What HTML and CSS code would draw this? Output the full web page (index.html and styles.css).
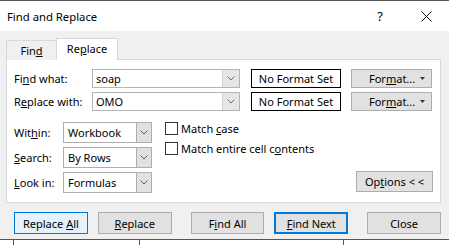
FILE: index.html
```html
<!DOCTYPE html>
<html lang="en">
<head>
    <meta charset="UTF-8">
    <meta name="viewport" content="width=device-width, initial-scale=1.0">
    <title>Find and Replace</title>
    <link rel="stylesheet" href="styles.css">
</head>
<body>
    <div class="window">
        <div class="titlebar">
            <span class="title">Find and Replace</span>
            <span class="cap-btn">?</span>
            <span class="cap-btn">
                <svg width="11" height="11" viewBox="0 0 11 11"><path d="M0.5 0.5 L10.5 10.5 M10.5 0.5 L0.5 10.5" stroke="#111" stroke-width="1" fill="none"/></svg>
            </span>
        </div>
        <div class="content">
            <div class="tabs">
                <div class="tab"><span>Fin<u>d</u></span></div>
                <div class="tab active"><span>Re<u>p</u>lace</span></div>
            </div>
            <div class="panel">
                <div class="find-rows">
                    <div class="row">
                        <span class="lbl lbl-wide">Fi<u>n</u>d what:</span>
                        <div class="combo">
                            <span class="val">soap</span>
                            <span class="drop"><svg width="8" height="5" viewBox="0 0 8 5"><polyline points="0.5,0.5 4,4 7.5,0.5" stroke="#707070" fill="none"/></svg></span>
                        </div>
                        <div class="fmt-box">No Format Set</div>
                        <div class="btn fmt-btn"><span>For<u>m</u>at...</span><svg class="arrow" width="5" height="3" viewBox="0 0 5 3"><polygon points="0,0 5,0 2.5,3" fill="#333"/></svg></div>
                    </div>
                    <div class="row">
                        <span class="lbl lbl-wide">R<u>e</u>place with:</span>
                        <div class="combo">
                            <span class="val">OMO</span>
                            <span class="drop"><svg width="8" height="5" viewBox="0 0 8 5"><polyline points="0.5,0.5 4,4 7.5,0.5" stroke="#707070" fill="none"/></svg></span>
                        </div>
                        <div class="fmt-box">No Format Set</div>
                        <div class="btn fmt-btn"><span>For<u>m</u>at...</span><svg class="arrow" width="5" height="3" viewBox="0 0 5 3"><polygon points="0,0 5,0 2.5,3" fill="#333"/></svg></div>
                    </div>
                </div>
                <div class="options">
                    <div class="selects">
                        <div class="srow">
                            <span class="lbl">Wit<u>h</u>in:</span>
                            <div class="select"><span class="val">Workbook</span><span class="sdrop"><svg width="8" height="5" viewBox="0 0 8 5"><polyline points="0.5,0.5 4,4 7.5,0.5" stroke="#606060" fill="none"/></svg></span></div>
                        </div>
                        <div class="srow">
                            <span class="lbl"><u>S</u>earch:</span>
                            <div class="select"><span class="val">By Rows</span><span class="sdrop"><svg width="8" height="5" viewBox="0 0 8 5"><polyline points="0.5,0.5 4,4 7.5,0.5" stroke="#606060" fill="none"/></svg></span></div>
                        </div>
                        <div class="srow">
                            <span class="lbl"><u>L</u>ook in:</span>
                            <div class="select"><span class="val">Formulas</span><span class="sdrop"><svg width="8" height="5" viewBox="0 0 8 5"><polyline points="0.5,0.5 4,4 7.5,0.5" stroke="#606060" fill="none"/></svg></span></div>
                        </div>
                    </div>
                    <div class="checks">
                        <div class="check"><span class="box"></span><span>Match <u>c</u>ase</span></div>
                        <div class="check"><span class="box"></span><span>Match entire cell c<u>o</u>ntents</span></div>
                        <div class="btn opt-btn"><span>Op<u>t</u>ions &lt; &lt;</span></div>
                    </div>
                </div>
            </div>
            <div class="actions">
                <div class="btn hover"><span>Replace <u>A</u>ll</span></div>
                <div class="btn"><span><u>R</u>eplace</span></div>
                <div class="btn gap-lg"><span>F<u>i</u>nd All</span></div>
                <div class="btn default"><span><u>F</u>ind Next</span></div>
                <div class="btn gap-lg"><span>Close</span></div>
            </div>
        </div>
        <div class="sheet">
            <div class="cell c1"></div>
            <div class="cell c2"></div>
            <div class="cell c3"></div>
        </div>
    </div>
</body>
</html>
```

FILE: styles.css
```css
* {
    box-sizing: border-box;
}
body {
    margin: 0;
    width: 449px;
    height: 245px;
    overflow: hidden;
    font-family: "Noto Sans", "Segoe UI", sans-serif;
    font-size: 11px;
    color: #000;
    background: #fff;
}
u {
    text-decoration: underline;
    text-underline-offset: 1px;
}
.window {
    border-top: 1px solid #555;
}
.titlebar {
    height: 30px;
    background: #fff;
    display: flex;
    align-items: center;
    padding-left: 7px;
}
.title {
    flex: 1;
    font-size: 11.3px;
}
.cap-btn {
    width: 46px;
    height: 30px;
    display: flex;
    align-items: center;
    justify-content: center;
    font-size: 13px;
}
.content {
    background: #f0f0f0;
    padding: 7px 8px 5px 6px;
}
.tabs {
    display: flex;
    align-items: flex-end;
    margin-bottom: -1px;
    position: relative;
}
.tab {
    width: 51px;
    height: 20px;
    border: 1px solid #d9d9d9;
    border-bottom: none;
    display: flex;
    align-items: center;
    justify-content: center;
    background: #f0f0f0;
}
.tab.active {
    width: 62px;
    height: 22px;
    margin-left: -1px;
    background: #fff;
    padding-bottom: 2px;
}
.panel {
    background: #fff;
    border: 1px solid #d9d9d9;
    height: 144px;
    padding: 9px 7px 9px 7px;
}
.find-rows {
    display: flex;
    flex-direction: column;
    gap: 4px;
}
.row {
    display: flex;
    align-items: center;
    height: 19px;
}
.lbl {
    width: 49px;
}
.lbl-wide {
    width: 78px;
}
.combo {
    width: 148px;
    height: 19px;
    border: 1px solid #b4b4b4;
    display: flex;
}
.combo .val {
    flex: 1;
    padding-left: 3px;
    line-height: 17px;
}
.drop {
    width: 17px;
    background: #e6e6e6;
    border-left: 1px solid #d0d0d0;
    display: flex;
    align-items: center;
    justify-content: center;
}
.fmt-box {
    width: 90px;
    height: 19px;
    margin-left: 11px;
    border: 1px solid #000;
    display: flex;
    align-items: center;
    justify-content: center;
}
.btn {
    height: 22px;
    width: 74px;
    background: #e1e1e1;
    border: 1px solid #adadad;
    display: flex;
    align-items: center;
    justify-content: center;
    white-space: nowrap;
}
.fmt-btn {
    width: 81px;
    height: 19px;
    margin-left: 10px;
    justify-content: flex-start;
    padding: 0 6px 0 17px;
}
.fmt-btn .arrow {
    margin-left: auto;
    flex-shrink: 0;
}
.options {
    display: flex;
    margin-top: 11px;
}
.selects {
    display: flex;
    flex-direction: column;
    gap: 4px;
}
.srow {
    display: flex;
    align-items: center;
    height: 21px;
}
.select {
    width: 89px;
    height: 21px;
    border: 1px solid #adadad;
    display: flex;
    background: #fff;
}
.select .val {
    flex: 1;
    padding-left: 4px;
    line-height: 19px;
}
.sdrop {
    width: 15px;
    background: #e1e1e1;
    border-left: 1px solid #adadad;
    display: flex;
    align-items: center;
    justify-content: center;
}
.checks {
    flex: 1;
    margin-left: 13px;
    display: flex;
    flex-direction: column;
    gap: 7px;
}
.check {
    display: flex;
    align-items: center;
    height: 13px;
    white-space: pre;
}
.box {
    width: 13px;
    height: 13px;
    border: 1px solid #333;
    background: #fff;
    margin-right: 3px;
}
.opt-btn {
    width: 77px;
    height: 21px;
    margin-top: auto;
    margin-bottom: 1px;
    align-self: flex-end;
}
.actions {
    display: flex;
    margin-top: 9px;
    padding-left: 8px;
    gap: 10px;
}
.actions .gap-lg {
    margin-left: 9px;
}
.btn.hover {
    background: #e5f1fb;
    border-color: #0078d7;
}
.btn.default {
    border: 2px solid #0078d7;
}
.sheet {
    height: 6px;
    border-top: 1px solid #555;
    display: flex;
    background: #fff;
}
.cell {
    border-right: 1px solid #555;
}
.c1 {
    width: 14px;
}
.c2 {
    width: 126px;
}
.c3 {
    width: 204px;
}
```
